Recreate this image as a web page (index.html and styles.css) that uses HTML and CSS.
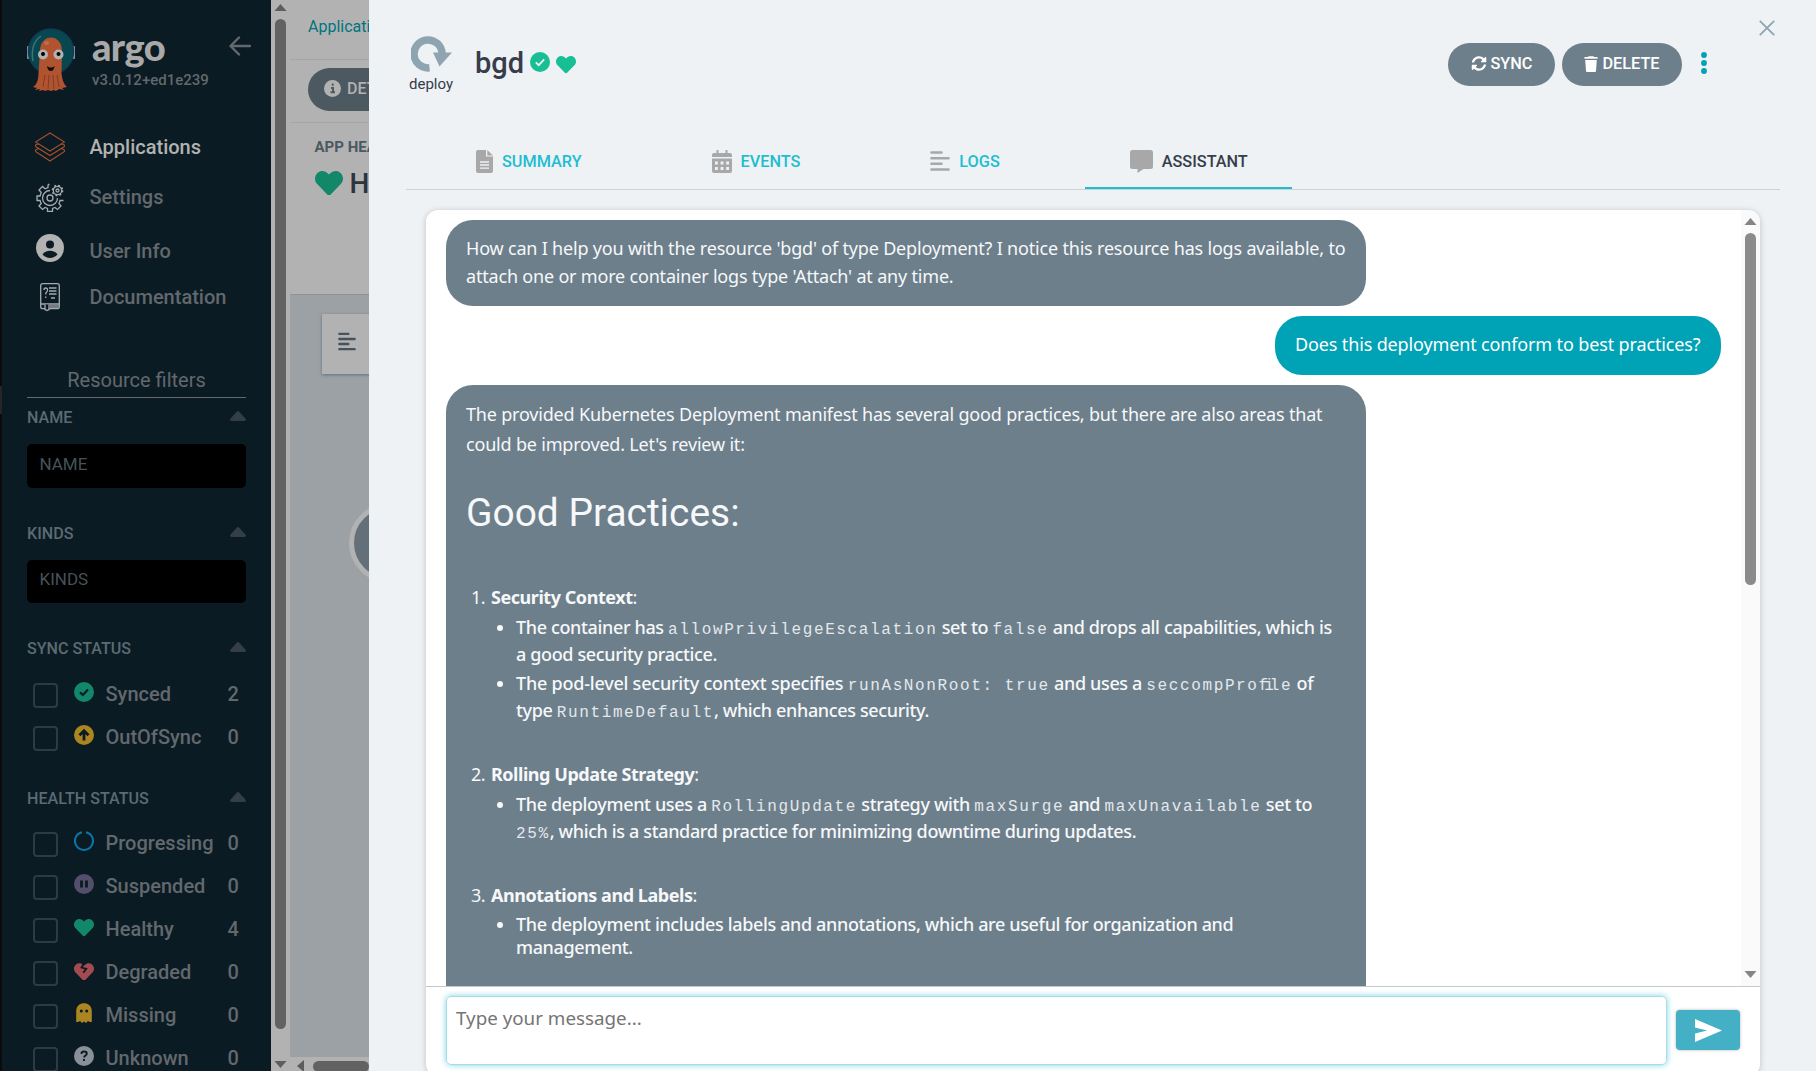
FILE: index.html
```html
<!DOCTYPE html>
<html lang="en">
<head>
<meta charset="utf-8">
<title>bgd - Argo CD</title>
<link rel="stylesheet" href="styles.css">
</head>
<body>
<svg class="defs" width="0" height="0">
  <symbol id="heart" viewBox="0 32 512 448"><path d="M462.3 62.6C407.5 15.9 326 24.3 275.7 76.2L256 96.5l-19.7-20.3C186.1 24.3 104.5 15.9 49.7 62.6c-62.8 53.6-66.1 149.8-9.9 207.9l193.5 199.8c12.5 12.9 32.8 12.9 45.3 0l193.5-199.8c56.3-58.1 53-154.3-9.8-207.9z"/></symbol>
  <symbol id="caret" viewBox="0 0 16 10"><path d="M1.5 10h13c1.3 0 2-1.300 1.100-2.200L9.300.8a1.800 1.800 0 0 0-2.600 0L.4 7.800C-.5 8.700.2 10 1.500 10z"/></symbol>
  <symbol id="lines" viewBox="0 0 20 20"><path d="M1.500 1.500h10M1.500 7.200h17M1.500 12.800h10M1.500 18.500h17" fill="none" stroke="currentColor" stroke-width="2.600" stroke-linecap="round"/></symbol>
</svg>
<div class="app">
  <div class="edge"><i></i></div>
  <aside class="sidebar">
    <header class="brand">
      <svg class="octo" viewBox="0 0 48 64">
        <rect x="0" y="18" width="3" height="13" rx="1" fill="#7f93a5"/><rect x="45" y="18" width="3" height="13" rx="1" fill="#7f93a5"/>
        <circle cx="24" cy="23.500" r="22.500" fill="#084750" stroke="#123c50" stroke-width="1.500"/>
        <path d="M6 33C4 22 7 13 14 8" fill="none" stroke="#3d7378" stroke-width="1.500"/>
        <path d="M13 23c0-18 22-18 22 0l-.5 22c.8 8 3 12 5.500 14l-5 1 2 2-5-1-3 2-2-1-3 1-3-1-3 1-2-1-4 1 1-2-5 1 2-2-4-1c4-2 5.500-8 5.500-14z" fill="#b2532f"/>
        <path d="M18 47l-2 12M22 47l-1 14M26 47l1 14M30 47l2 12" stroke="#7c3d29" stroke-width="1"/>
        <ellipse cx="19.500" cy="15" rx="2.500" ry="2" fill="#bd6d50"/>
        <circle cx="16" cy="26.500" r="5" fill="#b2b2b2"/><circle cx="31.500" cy="26.500" r="5" fill="#b2b2b2"/>
        <circle cx="16" cy="26" r="2" fill="#000"/><circle cx="31.500" cy="26" r="2" fill="#000"/>
        <path d="M20 38q4 3 7.500 0q-.5 5-3.700 5T20 38z" fill="#111"/>
      </svg>
      <div class="brand-text"><b>argo</b><span>v3.0.12+ed1e239</span></div>
      <svg class="back" viewBox="0 0 22 20"><path d="M10 1.500L1.500 10l8.500 8.500M2 10h19" fill="none" stroke="#62686d" stroke-width="2.400" stroke-linecap="round" stroke-linejoin="round"/></svg>
    </header>
    <nav>
      <a class="active"><svg viewBox="0 0 30 30" fill="none" stroke="#a5502f" stroke-width="1.100"><path d="M15 1L29.500 10 15 19 .5 10zM.5 14.500L15 23.500l14.500-9M.5 14.500v-1.500l3-1.500M29.500 14.500v-1.500l-3-1.500M.5 19.500L15 29l14.500-9.500v-1.500l-3-1.500M.5 19.500v-1.500l3-1.500"/></svg>Applications</a>
      <a><svg viewBox="0 0 30 30" fill="none" stroke="#a5abaf" stroke-width="1.300"><circle cx="15" cy="16" r="3"/><path d="M15 8.500a7.500 7.500 0 1 0 7.500 7.500M13 2.500v3l-3 1.300L7.500 4.500 4 8l2.200 2.500L5 14H2v4.500h3L6.200 21.500 4 24l3.500 3.500L10 25.500l2.500 1V29.500h5v-3l2.500-1 2.500 2L26 24l-2-2.500 1-3h3.500M13 2.500h1.500"/><circle cx="22.500" cy="8.500" r="4.200"/><circle cx="22.500" cy="8.500" r="5.200" stroke-dasharray="1.900 2.180" stroke-width="1.400"/><circle cx="22.500" cy="8.500" r="1.500"/></svg>Settings</a>
      <a><svg viewBox="0 0 30 30"><circle cx="15" cy="15" r="14" fill="#b2b2b2"/><circle cx="15" cy="11.500" r="4" fill="#0a1b23"/><path d="M7.500 21.500c3-5 12-5 15 0c-4 4.500-11 4.500-15 0z" fill="#0a1b23"/></svg>User Info</a>
      <a><svg viewBox="0 0 30 30" fill="none" stroke="#a5abaf" stroke-width="1.300"><rect x="5.700" y="1.700" width="18.600" height="25" rx="2"/><path d="M5.700 22h18.600M14 6h7.500M14 9h7.500M14 12h7.500M16 16h4M9 8q0-2 1.800-2t1.700 2-1.700 3v1.500M10.700 14.500v1.500"/><path d="M10 22.500v5l2 1 2-1v-5" fill="#0a1b23"/><rect x="15" y="23" width="9" height="3" fill="#747c81" stroke="none"/></svg>Documentation</a>
    </nav>
    <section class="filters">
      <h2>Resource filters</h2>
      <h3 class="f-name">NAME<svg><use href="#caret"/></svg></h3>
      <div class="field">NAME</div>
      <h3 class="f-kinds">KINDS<svg><use href="#caret"/></svg></h3>
      <div class="field kinds">KINDS</div>
      <h3 class="f-sync">SYNC STATUS<svg><use href="#caret"/></svg></h3>
      <div class="row"><i></i><svg viewBox="0 0 20 20"><circle cx="10" cy="10" r="10" fill="#12876a"/><path d="M6 10.300l2.800 2.700L14 7.500" fill="none" stroke="#0a1b23" stroke-width="2.200"/></svg><span>Synced</span><em>2</em></div>
      <div class="row"><i></i><svg viewBox="0 0 20 20"><circle cx="10" cy="10" r="10" fill="#aa8522"/><path d="M10 15.500V6M5.500 10.300L10 5.800l4.500 4.500" fill="none" stroke="#0a1b23" stroke-width="2.800"/></svg><span>OutOfSync</span><em>0</em></div>
      <h3 class="f-health">HEALTH STATUS<svg><use href="#caret"/></svg></h3>
      <div class="row"><i></i><svg viewBox="0 0 20 20"><path d="M8 1.200a9 9 0 1 0 4 0" fill="none" stroke="#0a76a5" stroke-width="2"/></svg><span>Progressing</span><em>0</em></div>
      <div class="row"><i></i><svg viewBox="0 0 20 20"><circle cx="10" cy="10" r="10" fill="#544e6b"/><path d="M7.500 6.500v7M12.500 6.500v7" stroke="#0a1b23" stroke-width="2.800"/></svg><span>Suspended</span><em>0</em></div>
      <div class="row"><i></i><svg class="flat" fill="#12876a"><use href="#heart"/></svg><span>Healthy</span><em>4</em></div>
      <div class="row"><i></i><svg class="flat" viewBox="0 0 20 17.500"><svg width="20" height="17.500" fill="#a34b50"><use href="#heart"/></svg><path d="M10.800 0L7.500 5.500l4.800 1.300-3 4" fill="none" stroke="#0a1b23" stroke-width="1.800"/></svg><span>Degraded</span><em>0</em></div>
      <div class="row"><i></i><svg viewBox="0 0 20 20"><path d="M2.200 8c0-10.500 15.600-10.500 15.600 0v11l-2 0-1.800-1-2 2-2-1.500-2 1.500-2-2-1.800 1-2 0z" fill="#aa8522"/><circle cx="7.300" cy="8" r="1.500" fill="#0a1b23"/><circle cx="12.700" cy="8" r="1.500" fill="#0a1b23"/></svg><span>Missing</span><em>0</em></div>
      <div class="row"><i></i><svg viewBox="0 0 20 20"><circle cx="10" cy="10" r="10" fill="#8a9097"/><path d="M7.300 7.800q.3-2.300 2.800-2.300 2.700 0 2.700 2.200c0 1.700-2.700 1.900-2.700 3.800M10 13v2" fill="none" stroke="#0a1b23" stroke-width="1.900"/></svg><span>Unknown</span><em>0</em></div>
    </section>
  </aside>
  <div class="vbar"><svg viewBox="0 0 12 7"><path d="M6 0l6 7H0z"/></svg><i></i><svg viewBox="0 0 12 7"><path d="M6 7l6-7H0z"/></svg></div>
  <main class="page">
    <div class="crumbs">Applications</div>
    <div class="tools"><button><svg viewBox="0 0 17 17"><circle cx="8.500" cy="8.500" r="8.500" fill="#b2b2b2"/><path d="M8.700 3.500v2.300M7 8h2v4M6.500 12.300h4.500" fill="none" stroke="#4c5961" stroke-width="1.900"/></svg>DETAILS</button></div>
    <div class="status"><h4>APP HEALTH</h4><p><svg fill="#12876a"><use href="#heart"/></svg>Healthy</p></div>
    <div class="graph"><div class="toolcard"><svg><use href="#lines"/></svg></div><div class="node"></div></div>
    <div class="hbar"><svg viewBox="0 0 7 12"><path d="M0 6l7-6v12z"/></svg><i></i></div>
  </main>
  <section class="panel">
    <svg class="close" viewBox="0 0 16 16"><path d="M.8.8l14.400 14.400M15.200.8L.8 15.200" stroke="#8fa4b1" stroke-width="1.800"/></svg>
    <header class="head">
      <div class="kind"><svg viewBox="0 0 41 36"><path d="M18.500 31.800A14 14 0 1 1 31 17.500" fill="none" stroke="#8fa4b1" stroke-width="7.500"/><path d="M22 16.500h19L28.500 30.500z" fill="#8fa4b1"/></svg><span>deploy</span></div>
      <h1>bgd</h1>
      <svg class="ok" viewBox="0 0 20 20"><circle cx="10" cy="10" r="10" fill="#18be94"/><path d="M5.800 10.300l2.900 2.800 5.500-5.800" fill="none" stroke="#eef2f5" stroke-width="1.800"/></svg>
      <svg class="love" fill="#18be94"><use href="#heart"/></svg>
      <div class="actions">
        <button class="sync"><svg viewBox="0 0 512 512"><path fill="#fff" d="M370.72 133.28C339.458 104.008 298.888 87.962 255.848 88c-77.458.068-144.328 53.178-162.791 126.850-1.344 5.363-6.122 9.150-11.651 9.150H24.103c-7.498 0-13.194-6.807-11.807-14.176C33.933 94.924 134.813 8 256 8c66.448 0 126.791 26.136 171.315 68.685L463.030 40.970C478.149 25.851 504 36.559 504 57.941V192c0 13.255-10.745 24-24 24H345.941c-21.382 0-32.090-25.851-16.971-40.971l41.750-41.749zM32 296h134.059c21.382 0 32.090 25.851 16.971 40.971l-41.750 41.750c31.262 29.273 71.835 45.319 114.876 45.280 77.418-.07 144.315-53.144 162.787-126.849 1.344-5.363 6.122-9.150 11.651-9.150h57.304c7.498 0 13.194 6.807 11.807 14.176C478.067 417.076 377.187 504 256 504c-66.448 0-126.791-26.136-171.315-68.685L48.970 471.030C33.851 486.149 8 475.441 8 454.059V320c0-13.255 10.745-24 24-24z"/></svg>SYNC</button>
        <button class="delete"><svg viewBox="0 0 14 16"><path fill="#fff" d="M.5 1H4l.6-.8h4.800L10 1h3.500v1.800H.5zM1.200 3.900h11.600L12 15q-.1 1-1 1H3q-.9 0-1-1z"/></svg>DELETE</button>
        <svg class="dots" viewBox="0 0 6 22"><circle cx="3" cy="3" r="2.900"/><circle cx="3" cy="11" r="2.900"/><circle cx="3" cy="19" r="2.900"/></svg>
      </div>
    </header>
    <nav class="tabs">
      <a><svg width="17" height="23" viewBox="0 0 17 23"><path fill="#a8a8a8" d="M2 0h8v6.500h7V21q0 2-2 2H2q-2 0-2-2V2q0-2 2-2zM11.300 0L17 5.500h-5.700z"/><path d="M4 12h9M4 15h9M4 18.200h9" stroke="#eef2f5" stroke-width="1.300"/></svg>SUMMARY</a>
      <a><svg width="20" height="23" viewBox="0 0 20 23"><path fill="#a8a8a8" d="M4.500 0h2v3h7V0h2v3H18q2 0 2 2v2H0V5q0-2 2-2h2.500zM0 8.500h20V21q0 2-2 2H2q-2 0-2-2z"/><path d="M3 13h14M3 18.500h14" stroke="#eef2f5" stroke-width="3" stroke-dasharray="2.800 2.800"/></svg>EVENTS</a>
      <a><svg width="20" height="20"><use href="#lines"/></svg>LOGS</a>
      <a class="on"><svg width="23" height="23" viewBox="0 0 23 23"><path fill="#a8a8a8" d="M2.500 0h18Q23 0 23 2.500v14q0 2.500-2.500 2.500h-7L7.500 23v-4h-5Q0 19 0 16.500v-14Q0 0 2.500 0z"/></svg>ASSISTANT</a>
    </nav>
    <div class="chat">
      <div class="scroll">
        <div class="log">
          <div class="msg bot short">How can I help you with the resource 'bgd' of type Deployment? I notice this resource has logs available, to<br>attach one or more container logs type 'Attach' at any time.</div>
          <div class="msg user">Does this deployment conform to best practices?</div>
          <div class="msg bot long">
            <p>The provided Kubernetes Deployment manifest has several good practices, but there are also areas that<br>could be improved. Let's review it:</p>
            <h2>Good Practices:</h2>
            <div class="item">1. <b>Security Context</b>:</div>
            <ul>
              <li>The container has <code>allowPrivilegeEscalation</code> set to <code>false</code> and drops all capabilities, which is<br>a good security practice.</li>
              <li><span class="wide">The pod-level security context specifies </span><code>runAsNonRoot: true</code> and uses a <code>seccompPro<span class="lig">fi</span>le</code> of<br>type <code>RuntimeDefault</code>, which enhances security.</li>
            </ul>
            <div class="item">2. <b>Rolling Update Strategy</b>:</div>
            <ul>
              <li>The deployment uses a <code>RollingUpdate</code> strategy with <code>maxSurge</code> and <code>maxUnavailable</code> set to<br><code>25%</code>, which is a standard practice for minimizing downtime during updates.</li>
            </ul>
            <div class="item">3. <b>Annotations and Labels</b>:</div>
            <ul class="tight">
              <li>The deployment includes labels and annotations, which are useful for organization and<br>management.</li>
            </ul>
          </div>
        </div>
        <div class="cbar"><svg viewBox="0 0 12 7"><path d="M6 0l6 7H0z"/></svg><i></i><svg viewBox="0 0 12 7"><path d="M6 7l6-7H0z"/></svg></div>
      </div>
      <div class="compose">
        <div class="input">Type your message...</div>
        <button class="send"><svg viewBox="0 0 27 23"><path fill="#fff" d="M0 0l27 11.500L0 23v-8.500l12-3L0 8.500z"/></svg></button>
      </div>
    </div>
  </section>
</div>
</body>
</html>
```
FILE: styles.css
```css
* { box-sizing: border-box; }
body { margin: 0; height: 1071px; overflow: hidden; font-family: Roboto, "Liberation Sans", sans-serif; }
h1, h2, h3, h4, p, ul { margin: 0; padding: 0; font-weight: 500; }
button { border: 0; font: inherit; }
svg { display: block; flex: none; }
i, em { font-style: normal; }
.defs { position: absolute; }
.app { display: grid; grid-template-columns: 2px 269px 19px 79px 1447px; height: 1071px; overflow: hidden; }
.app > * { height: 1071px; overflow: hidden; min-width: 0; }

.edge { background: #0b0b0b; padding-top: 386px; }
.edge i { display: block; height: 28px; background: #262626; }

/* left navigation */
.sidebar { background: #0a1b23; color: #62686d; padding: 0 25px; }
.brand { display: flex; height: 121px; }
.octo { width: 48px; height: 64px; margin-top: 28px; }
.brand-text { display: flex; flex-direction: column; flex: none; margin: 26px 0 0 17px; width: 137px; }
.brand-text b { font: 900 38px/40px Lato, sans-serif; color: #a9a9a9; letter-spacing: -.6px; height: 40px; }
.brand-text span { font-size: 15px; line-height: 20px; font-weight: 500; letter-spacing: 0; margin-top: 4px; }
.back { width: 22px; height: 20px; margin-top: 36px; }
nav a { display: flex; }
.sidebar nav a { align-items: center; height: 52px; gap: 24.500px; font-size: 20px; font-weight: 500; padding-left: 8px; }
.sidebar nav a svg { width: 30px; height: 30px; }
.sidebar nav .active { color: #b2b2b2; }
.sidebar nav a:nth-child(2) { height: 48px; }
.sidebar nav a:nth-child(3) { height: 59px; }
.sidebar nav a:nth-child(3) svg { margin-top: -6px; }
.sidebar nav a:nth-child(4) { height: 34px; }
.filters h2 { font-size: 20px; font-weight: 400; line-height: 25px; margin-top: 54px; height: 30px; text-align: center; border-bottom: 1px solid #62686d; margin-bottom: 9px; }
.filters h3 { display: flex; justify-content: space-between; font-size: 16.100px; line-height: 22px; height: 22px; color: #5c6a72; }
.filters h3 svg { width: 16px; height: 10px; margin-top: 4px; fill: #333e47; }
.field { background: #000; border-radius: 5px; height: 44px; padding-left: 12.500px; font-size: 17px; line-height: 40px; color: #46525a; margin-top: 15px; }
.field.kinds { height: 43px; line-height: 38px; }
.f-kinds { margin-top: 35px; }
.f-sync { margin-top: 35px; }
.filters .f-health { margin-top: 20px; margin-bottom: 21px; }
.filters .f-sync { margin-bottom: 22px; }
.row { display: flex; height: 43px; padding-left: 6px; font-size: 20px; font-weight: 500; line-height: 24px; }
.row i { width: 25px; height: 25px; border: 2px solid #2f3b44; border-radius: 4px; margin: 1px 16px 0 0; }
.row svg { width: 20px; height: 20px; margin-right: 11.500px; }
.row svg.flat { height: 17.500px; margin-top: 2px; }
.row span { width: 122px; }

/* dimmed application page */
.vbar { background: #b2b2b2; display: flex; flex-direction: column; align-items: center; padding: 4px 0 3px; }
.vbar svg { width: 13px; height: 7px; fill: #5d5d5d; }
.vbar i { width: 11px; height: 1010px; background: #626262; border-radius: 6px; margin: 8px 0 32px; }
.page { background: #b2b2b2; display: flex; flex-direction: column; }
.page > * { flex: none; }
.crumbs { height: 60px; border-bottom: 1px solid #a4a7a9; padding: 15px 0 0 18px; font-size: 16px; line-height: 24px; color: #00747f; white-space: nowrap; }
.tools { height: 63px; border-bottom: 1px solid #a4a7a9; padding: 8px 0 0 18px; }
.tools button { display: flex; align-items: center; gap: 6px; width: 140px; height: 43px; border-radius: 22px; padding: 0 0 3px 16px; background: #4c5961; color: #b2b2b2; font-size: 16px; font-weight: 500; }
.tools svg { width: 17px; height: 17px; }
.status { height: 171px; padding: 14px 0 0 24.500px; }
.status h4 { font-size: 15px; line-height: 20px; font-weight: 700; color: #4c5961; white-space: nowrap; }
.status p { display: flex; align-items: center; gap: 7px; margin-top: 10px; height: 32px; font-size: 28px; color: #2c343c; }
.status p svg { width: 28px; height: 24.500px; }
.graph { height: 763px; background: #9ca1a5; border-top: 1px solid #8d9397; padding-top: 19px; }
.toolcard { margin-left: 32px; width: 80px; height: 60px; background: #b2b2b2; box-shadow: 0 1px 3px #62717d; padding: 18px 16px; color: #46535c; }
.toolcard svg { width: 18px; height: 19px; }
.node { width: 80px; height: 80px; border-radius: 50%; border: 5px solid #b2b2b2; background: #637079; margin: 129px 0 0 59px; }
.hbar { height: 14px; display: flex; padding: 4px 0 0 7px; }
.hbar svg { width: 7px; height: 12px; fill: #5d5d5d; margin-top: -1px; }
.hbar i { width: 90px; height: 11px; margin-left: 9px; border-radius: 6px; background: #626262; }

/* resource panel */
.panel { background: #eef2f5; position: relative; padding-left: 37px; color: #363c4a; }
.close { position: absolute; left: 1390px; top: 20px; width: 16px; height: 16px; }
.head { display: flex; height: 136px; padding-left: 3px; }
.kind { width: 44px; padding-top: 36px; text-align: center; font-size: 15px; line-height: 20px; }
.kind svg { width: 41px; height: 36px; margin-left: 2px; }
.kind span { display: block; margin-top: 2px; }
h1 { font-size: 29px; line-height: 34px; margin: 46px 8px 0 22px; width: 47px; }
.ok { width: 20px; height: 20px; margin: 52px 6px 0 0; }
.love { width: 20px; height: 17.500px; margin-top: 56px; }
.actions { display: flex; margin: 43px 0 0 872px; gap: 7px; }
.actions button { display: flex; align-items: center; justify-content: center; height: 43px; border-radius: 22px; background: #6d7f8b; color: #fff; font-size: 16.300px; font-weight: 500; padding-bottom: 3px; gap: 4px; }
.sync { width: 107px; } .delete { width: 120px; }
.sync svg { width: 16px; height: 15px; }
.delete svg { width: 14px; height: 16px; }
.dots { width: 6px; height: 22px; margin: 9px 0 0 12px; fill: #00a2b3; }
.tabs { display: flex; gap: 40px; width: 1374px; height: 54px; padding-left: 25px; border-bottom: 1px solid #ccd2d7; }
.tabs a { height: 53px; padding: 0 45px 3px; align-items: center; gap: 9px; font-size: 16.250px; font-weight: 500; color: #1fbdd0; white-space: nowrap; }
.tabs a svg { color: #a8a8a8; }
.tabs .on { color: #363c4a; border-bottom: 2px solid #1fbdd0; padding-bottom: 1px; width: 207px; }

/* assistant chat */
.chat { margin: 20px 0 0 20px; width: 1334px; height: 866px; background: #fff; border-radius: 12px; box-shadow: 0 1px 6px rgba(0,0,0,.2); overflow: hidden; font-family: "Noto Sans", "Open Sans", sans-serif; font-size: 18px; }
.scroll { display: grid; grid-template-columns: 1315px 19px; height: 777px; border-bottom: 1px solid #c8c8c8; overflow: hidden; }
.log { height: 776px; overflow: hidden; padding: 10px 20px; display: flex; flex-direction: column; gap: 10px; letter-spacing: -.19px; }
.msg { flex: none; border-radius: 27px; padding: 14px 20px 16px; line-height: 28px; white-space: nowrap; color: #f6f8fa; }
.bot { width: 920px; background: #6d7f8b; }
.user { align-self: flex-end; width: 446px; height: 59px; background: #00a2b5; color: #fff; letter-spacing: -.14px; }
.msg p { font-weight: 400; line-height: 30px; }
.long { height: 700px; }
.long h2 { font: 400 38.900px/48px Roboto, sans-serif; letter-spacing: 0; margin: 30px 0 46px; }
.item { height: 28px; margin: 36px 0 3px 5px; letter-spacing: -.45px; }
.item b { margin-left: 1.500px; }
h2 + .item { margin-top: 0; }
.long ul { line-height: 27px; padding-left: 50px; letter-spacing: -.36px; }
.long li { margin-bottom: 2px; }
.long .wide { letter-spacing: -.22px; }
.long .tight { line-height: 23px; padding-top: 1px; }
code { font: 16px/1 "Liberation Mono", monospace; letter-spacing: 1.620px; color: #e3e8eb; }
.lig { letter-spacing: -3.980px; }
.cbar { background: #fafafa; display: flex; flex-direction: column; align-items: center; padding-top: 8px; }
.cbar svg { width: 13px; height: 7px; fill: #858585; }
.cbar i { width: 11px; height: 352px; margin: 8px 0 386px; border-radius: 6px; background: #8b8b8b; }
.compose { display: flex; padding: 9px 20px 10px; gap: 9px; }
.input { width: 1221px; height: 69px; border-radius: 5px; border: 1px solid #a5dce5; box-shadow: 0 0 6px #7fd3e0; padding: 8px 9px; font-size: 18.800px; line-height: 26px; color: #757575; }
.send { width: 64px; height: 40px; margin-top: 14px; border-radius: 4px; background: #43b0c6; box-shadow: 0 0 3px rgba(0,0,0,.3); padding: 0 0 0 19px; }
.send svg { width: 27px; height: 23px; }
```
